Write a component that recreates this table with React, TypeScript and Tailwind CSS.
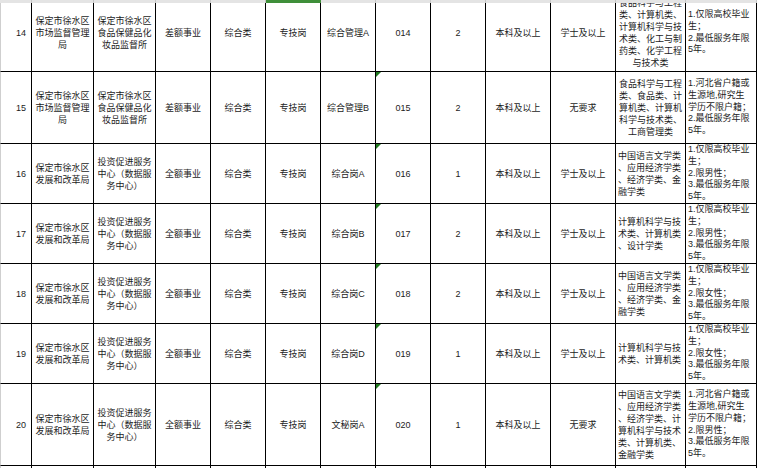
import React from 'react';

type Row = {
  no: string;
  dept: string[];
  unit: string[];
  kind: string;
  code: string;
  name: string;
  count: string;
  degree: string;
  major: string[];
  majorCenter: boolean;
  other: string[];
  h: string;
};

const jdDept = ['保定市徐水区', '市场监督管理', '局'];
const jdUnit = ['保定市徐水区', '食品保健品化', '妆品监督所'];
const fgDept = ['保定市徐水区', '发展和改革局'];
const fgUnit = ['投资促进服务', '中心（数据服', '务中心）'];

const rows: Row[] = [
  {
    no: '14', dept: jdDept, unit: jdUnit, kind: '差额事业', name: '综合管理A', code: '014', count: '2', degree: '学士及以上',
    major: ['食品科学与工程', '类、计算机类、', '计算机科学与技', '术类、化工与制', '药类、化学工程', '与技术类'],
    majorCenter: true,
    other: ['1.仅限高校毕业', '生；', '2.最低服务年限', '5年。'],
    h: 'h-[78px] -mt-[9px]',
  },
  {
    no: '15', dept: jdDept, unit: jdUnit, kind: '差额事业', name: '综合管理B', code: '015', count: '2', degree: '无要求',
    major: ['食品科学与工程', '类、食品类、计', '算机类、计算机', '科学与技术类、', '工商管理类'],
    majorCenter: true,
    other: ['1.河北省户籍或', '生源地,研究生', '学历不限户籍；', '2.最低服务年限', '5年。'],
    h: 'h-[72px]',
  },
  {
    no: '16', dept: fgDept, unit: fgUnit, kind: '全额事业', name: '综合岗A', code: '016', count: '1', degree: '学士及以上',
    major: ['中国语言文学类', '、应用经济学类', '、经济学类、金', '融学类'],
    majorCenter: false,
    other: ['1.仅限高校毕业', '生；', '2.限男性；', '3.最低服务年限', '5年。'],
    h: 'h-[60px]',
  },
  {
    no: '17', dept: fgDept, unit: fgUnit, kind: '全额事业', name: '综合岗B', code: '017', count: '2', degree: '学士及以上',
    major: ['计算机科学与技', '术类、计算机类', '、设计学类'],
    majorCenter: false,
    other: ['1.仅限高校毕业', '生；', '2.限男性；', '3.最低服务年限', '5年。'],
    h: 'h-[60px]',
  },
  {
    no: '18', dept: fgDept, unit: fgUnit, kind: '全额事业', name: '综合岗C', code: '018', count: '2', degree: '学士及以上',
    major: ['中国语言文学类', '、应用经济学类', '、经济学类、金', '融学类'],
    majorCenter: false,
    other: ['1.仅限高校毕业', '生；', '2.限女性；', '3.最低服务年限', '5年。'],
    h: 'h-[60px]',
  },
  {
    no: '19', dept: fgDept, unit: fgUnit, kind: '全额事业', name: '综合岗D', code: '019', count: '1', degree: '学士及以上',
    major: ['计算机科学与技', '术类、计算机类'],
    majorCenter: false,
    other: ['1.仅限高校毕业', '生；', '2.限女性；', '3.最低服务年限', '5年。'],
    h: 'h-[60px]',
  },
  {
    no: '20', dept: fgDept, unit: fgUnit, kind: '全额事业', name: '文秘岗A', code: '020', count: '1', degree: '无要求',
    major: ['中国语言文学类', '、应用经济学类', '、经济学类、计', '算机科学与技术', '类、计算机类、', '金融学类'],
    majorCenter: false,
    other: ['1.河北省户籍或', '生源地,研究生', '学历不限户籍；', '2.限男性；', '3.最低服务年限', '5年。'],
    h: 'h-[82px]',
  },
];

const cols = 'grid grid-cols-[32px_62px_62px_55px_55px_55px_55px_55px_55px_65px_65px_70px_71px]';
const cell = 'relative flex flex-col justify-center overflow-hidden border-r border-b border-black';

function Lines({ lines }: { lines: string[] }) {
  return (
    <>
      {lines.map((l, i) => (
        <div key={i} className="whitespace-nowrap">{l}</div>
      ))}
    </>
  );
}

export default function App() {
  return (
    <div
      className="h-[468px] w-[757px] overflow-hidden bg-white text-[9px] leading-[12px] text-[#1c1c1c]"
      style={{ fontFamily: '"Liberation Sans", "Noto Sans CJK SC", sans-serif' }}
    >
      {/* column header edge */}
      <div className={`${cols} h-[3px]`}>
        {Array.from({ length: 13 }).map((_, i) => (
          <div
            key={i}
            className={i === 5 ? 'bg-[#3f8f3a]' : 'border-r border-[#c6c6c6] bg-[#e4e4e4]'}
          />
        ))}
      </div>

      <div className="h-[465px] overflow-hidden">
        {rows.map((r) => (
          <div key={r.no} className={`${cols} ${r.h}`}>
            <div className={`${cell} border-l border-l-[#cfcfcf] items-center pl-[10px]`}>{r.no}</div>
            <div className={`${cell} items-center text-center`}>
              <Lines lines={r.dept} />
            </div>
            <div className={`${cell} items-center text-center`}>
              <Lines lines={r.unit} />
            </div>
            <div className={`${cell} items-center`}>{r.kind}</div>
            <div className={`${cell} items-center`}>综合类</div>
            <div className={`${cell} items-center`}>专技岗</div>
            <div className={`${cell} items-center`}>{r.name}</div>
            <div className={`${cell} items-center`}>
              {r.no !== '14' && (
                <span className="absolute left-0 top-0 h-0 w-0 border-r-[5px] border-t-[5px] border-r-transparent border-t-[#1f7a1f]" />
              )}
              {r.code}
            </div>
            <div className={`${cell} items-center`}>{r.count}</div>
            <div className={`${cell} items-center`}>本科及以上</div>
            <div className={`${cell} items-center`}>{r.degree}</div>
            <div className={`${cell} ${r.majorCenter ? 'items-center text-center' : 'items-start pl-[2px]'}`}>
              <Lines lines={r.major} />
            </div>
            <div className={`${cell} items-start pl-[2px] leading-[11.7px]`}>
              <Lines lines={r.other} />
            </div>
          </div>
        ))}
        <div className={`${cols} h-[20px]`}>
          {Array.from({ length: 13 }).map((_, i) => (
            <div key={i} className={`border-r border-black ${i === 0 ? 'border-l border-l-[#cfcfcf]' : ''}`} />
          ))}
        </div>
      </div>
    </div>
  );
}
